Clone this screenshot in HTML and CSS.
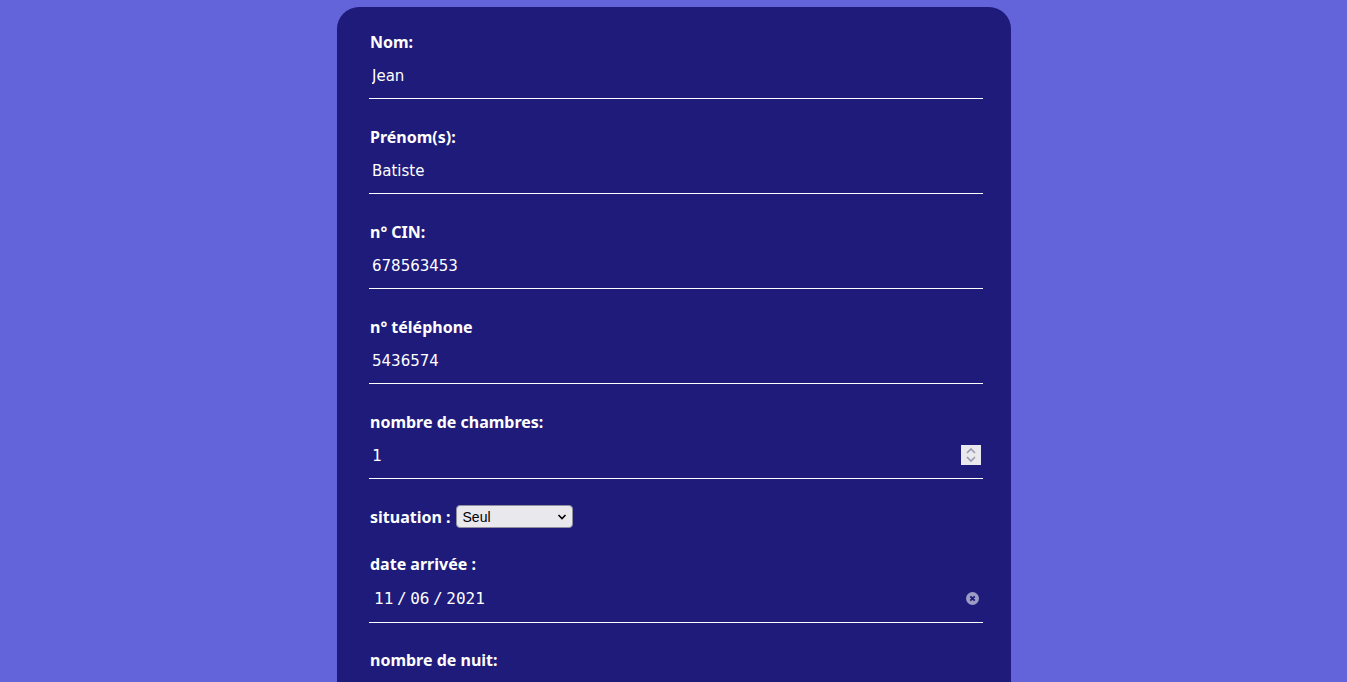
FILE: index.html
```html
<!DOCTYPE html>
<html lang="fr">
<head>
<meta charset="utf-8">
<title>Réservation</title>
<link rel="stylesheet" href="styles.css">
</head>
<body>
<form class="card">
  <div class="field">
    <label class="label">Nom:</label>
    <div class="box"><input class="input" type="text" value="Jean"></div>
  </div>
  <div class="field">
    <label class="label">Prénom(s):</label>
    <div class="box"><input class="input" type="text" value="Batiste"></div>
  </div>
  <div class="field">
    <label class="label">n° CIN:</label>
    <div class="box"><input class="input" type="text" value="678563453"></div>
  </div>
  <div class="field">
    <label class="label">n° téléphone</label>
    <div class="box"><input class="input" type="text" value="5436574"></div>
  </div>
  <div class="field">
    <label class="label">nombre de chambres:</label>
    <div class="box">
      <input class="input num" type="text" value="1">
      <span class="spin"><svg width="12" height="16" viewBox="0 0 12 16"><path d="M2 6 L6 2 L10 6 M2 10 L6 14 L10 10" fill="none" stroke="#9a9aae" stroke-width="1.6"/></svg></span>
    </div>
  </div>
  <div class="row">
    <label class="label inline">situation :</label>
    <span class="select-wrap">
      <select class="select"><option>Seul</option><option>Couple</option><option>Famille</option></select>
      <svg class="chev" width="10" height="8" viewBox="0 0 10 8"><path d="M1.5 2 L5 5.5 L8.5 2" fill="none" stroke="#000" stroke-width="1.6"/></svg>
    </span>
  </div>
  <div class="field date-field">
    <label class="label">date arrivée :</label>
    <div class="box tall">
      <input class="input date" type="text" value="11 / 06 / 2021">
      <span class="clear"><svg width="13" height="13" viewBox="0 0 13 13"><circle cx="6.5" cy="6.5" r="6.5" fill="#9d9cc4"/><path d="M4.3 4.3 L8.7 8.7 M8.7 4.3 L4.3 8.7" stroke="#1e1b7a" stroke-width="1.8"/></svg></span>
    </div>
  </div>
  <div class="field">
    <label class="label">nombre de nuit:</label>
    <div class="box"><input class="input num" type="text" value="1"></div>
  </div>
</form>
</body>
</html>
```

FILE: styles.css
```css
html, body {
  margin: 0;
  padding: 0;
}
body {
  background: #6464da;
  padding-top: 7px;
  font-family: "Noto Sans", "DejaVu Sans", sans-serif;
}
.card {
  width: 674px;
  box-sizing: border-box;
  margin: 0 auto 0 337px;
  background: #1e1b7a;
  border-radius: 22px;
  padding: 24px 28px 40px 32px;
  min-height: 760px;
}
.field {
  margin-bottom: 27px;
}
.date-field {
  margin-bottom: 26px;
}
.label {
  display: block;
  color: #ffffff;
  font-family: "Comic Sans MS", "Noto Sans", sans-serif;
  font-weight: 700;
  font-size: 16px;
  line-height: 22px;
  padding-left: 1px;
}
.label.inline {
  display: inline-block;
}
.box {
  position: relative;
  height: 45px;
  border-bottom: 1px solid #ffffff;
  display: flex;
  align-items: center;
}
.box.tall {
  height: 47px;
}
.input {
  flex: 1;
  background: transparent;
  border: none;
  outline: none;
  color: #ffffff;
  font-family: "DejaVu Sans", sans-serif;
  font-size: 15px;
  padding: 0 0 0 3px;
  margin: 0;
  height: 45px;
}
.input.num {
  font-family: "DejaVu Sans Mono", monospace;
  font-size: 16px;
}
.input.date {
  font-family: "DejaVu Sans Mono", monospace;
  font-size: 16px;
  word-spacing: -6px;
  padding-left: 5px;
  padding-top: 0;
}
.spin {
  position: absolute;
  right: 2px;
  top: 12px;
  width: 20px;
  height: 20px;
  background: #e9e9ed;
  display: flex;
  align-items: center;
  justify-content: center;
}
.clear {
  position: absolute;
  right: 4px;
  top: 17px;
  width: 13px;
  height: 13px;
  display: flex;
}
.row {
  display: flex;
  align-items: center;
  gap: 5px;
  margin-bottom: 25px;
  margin-top: -1px;
}
.select-wrap {
  position: relative;
  display: inline-flex;
}
.select {
  -webkit-appearance: none;
  appearance: none;
  width: 117px;
  height: 23px;
  background: #e9e9ed;
  border: 1px solid #8f8f9d;
  border-radius: 4px;
  font-family: "Liberation Sans", "DejaVu Sans", sans-serif;
  font-size: 14px;
  color: #000;
  padding: 0 0 0 6px;
  margin: 0;
}
.chev {
  position: absolute;
  right: 6px;
  top: 8px;
  pointer-events: none;
}
```
